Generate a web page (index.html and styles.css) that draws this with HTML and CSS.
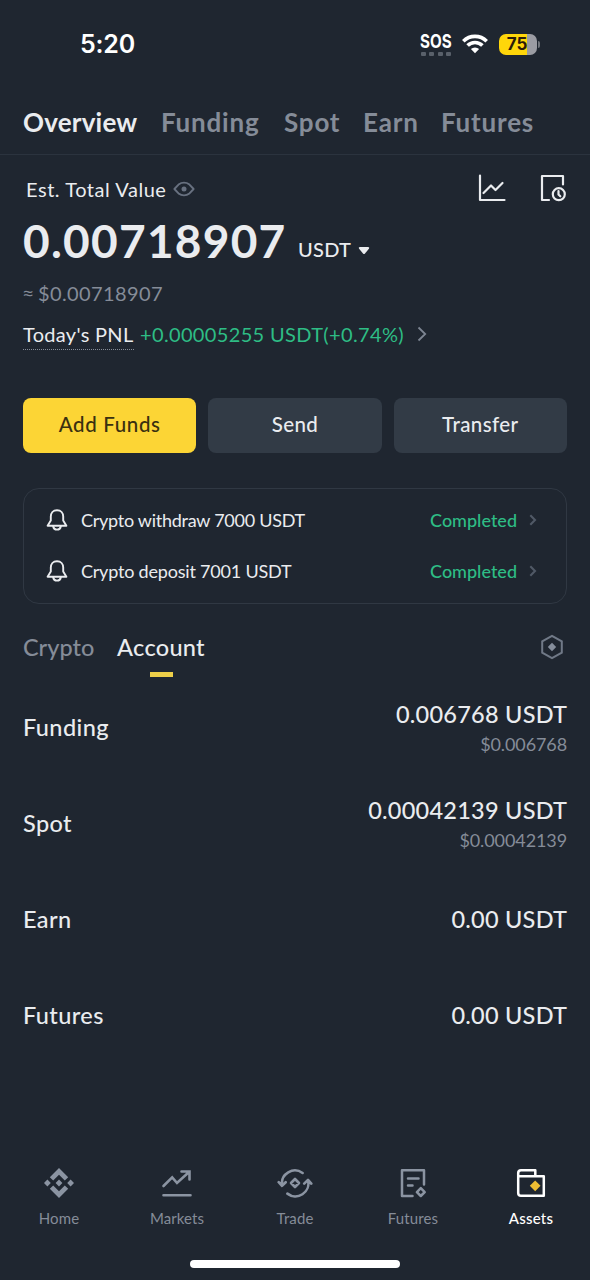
FILE: index.html
```html
<!DOCTYPE html>
<html lang="en">
<head>
<meta charset="utf-8">
<title>Assets overview</title>
<link rel="stylesheet" href="styles.css">
</head>
<body>
<div class="screen">
  <header class="status">
    <span class="clock">5:20</span>
    <div class="indicators">
      <div class="sos"><span class="sos-text">SOS</span><span class="dots"><i></i><i></i><i></i><i></i></span></div>
      <svg class="wifi" width="26" height="20" viewBox="0 0 26 20"><g fill="none" stroke="#fff" stroke-width="3.6"><path d="M1.3 7.2A16.6 16.6 0 0 1 24.7 7.2"/><path d="M5.6 11.6A10.4 10.4 0 0 1 20.4 11.6"/></g><path fill="#fff" d="M8.9 15.1a5.8 5.8 0 0 1 8.2 0L13 19.3z"/></svg>
      <div class="battery"><span class="level">75</span></div>
      <span class="battery-tip"></span>
    </div>
  </header>

  <nav class="tabs">
    <span class="tab tab-overview">Overview</span>
    <span class="tab tab-funding">Funding</span>
    <span class="tab tab-spot">Spot</span>
    <span class="tab tab-earn">Earn</span>
    <span class="tab tab-futures">Futures</span>
  </nav>

  <main class="content">
    <div class="total-head">
      <span class="total-label">Est. Total Value</span>
      <svg class="eye" width="22" height="16" viewBox="0 0 22 16"><path d="M1.4 8L6 3.2Q8 1.6 11 1.6T16 3.2L20.6 8L16 12.8Q14 14.4 11 14.4T6 12.8Z" fill="none" stroke="#687180" stroke-width="1.9" stroke-linejoin="round"/><circle cx="11" cy="8" r="2.5" fill="#687180"/></svg>
      <div class="tools">
        <svg width="28" height="28" viewBox="0 0 28 28" fill="none" stroke="#eaecef" stroke-width="2.2" stroke-linecap="round" stroke-linejoin="round"><path d="M2 1.5V26H26.5M5.5 19L13 11.5L17.5 16L24.5 9"/></svg>
        <svg width="28" height="28" viewBox="0 0 28 28" fill="none" stroke="#eaecef" stroke-width="2.2" stroke-linecap="round" stroke-linejoin="round"><path d="M10 26H3V2H24V10.5"/><circle cx="19.8" cy="20.2" r="6"/><path d="M19.5 17V20.4L21.3 22.3"/></svg>
      </div>
    </div>
    <div class="amount-row">
      <span class="amount">0.00718907</span>
      <span class="unit">USDT</span>
      <svg class="caret" width="12" height="8" viewBox="0 0 12 8"><path d="M1.7 0H10.3Q12 .4 10.9 1.8L7 6.5Q6 7.6 5 6.5L1.1 1.8Q0 .4 1.7 0Z" fill="#eaecef"/></svg>
    </div>
    <div class="approx"><span class="sign">≈</span><span>$0.00718907</span></div>
    <div class="pnl">
      <span class="pnl-label">Today's PNL</span>
      <span class="pnl-value">+0.00005255 USDT(+0.74%)</span>
      <svg width="10" height="16" viewBox="0 0 10 16"><path d="M1.5 1.5L8.2 8L1.5 14.5" fill="none" stroke="#7d8592" stroke-width="1.8"/></svg>
    </div>
    <div class="actions">
      <div class="button primary">Add Funds</div>
      <div class="button">Send</div>
      <div class="button">Transfer</div>
    </div>
    <section class="notices">
      <div class="notice">
        <svg width="22" height="22" viewBox="0 0 22 22" fill="none" stroke="#eaecef" stroke-width="1.9" stroke-linecap="round" stroke-linejoin="round"><path d="M11 1.2C7 1.2 4.8 4 4.8 7.6V11.5L1.6 16.8H20.4L17.2 11.5V7.6C17.2 4 15 1.2 11 1.2Z"/><path d="M7.2 17.5Q7.8 20.6 11 20.6T14.8 17.5"/></svg>
        <span class="notice-text withdraw">Crypto withdraw 7000 USDT</span><span class="state">Completed</span>
        <svg class="chevron" width="8" height="12" viewBox="0 0 8 12"><path d="M1.3 1.2L6 6L1.3 10.8" fill="none" stroke="#505966" stroke-width="2.1"/></svg>
      </div>
      <div class="notice">
        <svg width="22" height="22" viewBox="0 0 22 22" fill="none" stroke="#eaecef" stroke-width="1.9" stroke-linecap="round" stroke-linejoin="round"><path d="M11 1.2C7 1.2 4.8 4 4.8 7.6V11.5L1.6 16.8H20.4L17.2 11.5V7.6C17.2 4 15 1.2 11 1.2Z"/><path d="M7.2 17.5Q7.8 20.6 11 20.6T14.8 17.5"/></svg>
        <span class="notice-text deposit">Crypto deposit 7001 USDT</span><span class="state">Completed</span>
        <svg class="chevron" width="8" height="12" viewBox="0 0 8 12"><path d="M1.3 1.2L6 6L1.3 10.8" fill="none" stroke="#505966" stroke-width="2.1"/></svg>
      </div>
    </section>
    <div class="view-tabs">
      <span class="view crypto">Crypto</span>
      <span class="view account">Account</span>
      <svg class="settings" width="24" height="26" viewBox="0 0 24 26"><path d="M12 1.8L21.8 7.3V18.7L12 24.2L2.2 18.7V7.3Z" fill="none" stroke="#707987" stroke-width="2"/><path d="M12 8.8L16.2 13L12 17.2L7.8 13Z" fill="#858e9c"/></svg>
    </div>
    <section class="accounts">
      <div class="account-row"><span class="name">Funding</span><div class="value"><b>0.006768 USDT</b><small>$0.006768</small></div></div>
      <div class="account-row"><span class="name">Spot</span><div class="value"><b>0.00042139 USDT</b><small>$0.00042139</small></div></div>
      <div class="account-row"><span class="name">Earn</span><div class="value"><b>0.00 USDT</b></div></div>
      <div class="account-row"><span class="name">Futures</span><div class="value"><b>0.00 USDT</b></div></div>
    </section>
  </main>

  <footer class="bottom">
    <div class="item"><svg width="36" height="32" viewBox="0 0 36 32" fill="#8b94a2"><path d="M18 1L27.2 10.2L23.8 13.6L18 7.8L12.2 13.6L8.8 10.2ZM18 31L27.2 21.8L23.8 18.4L18 24.2L12.2 18.4L8.8 21.8ZM18 12.6L21.4 16L18 19.4L14.6 16ZM6.4 12.6L9.8 16L6.4 19.4L3 16ZM29.6 12.6L33 16L29.6 19.4L26.2 16Z"/></svg><span>Home</span></div>
    <div class="item"><svg width="36" height="32" viewBox="0 0 36 32" fill="none" stroke="#8b94a2" stroke-width="2.6"><path d="M4.5 19L13.2 10.3L18 16L30.3 4.8M22.5 4.5H30.5V12.5M4.5 28.2H31.5" stroke-linecap="round"/></svg><span>Markets</span></div>
    <div class="item"><svg width="36" height="32" viewBox="0 0 36 32" fill="none" stroke="#8b94a2" stroke-width="2.6" stroke-linecap="round" stroke-linejoin="round"><path d="M25.6 6A13 13 0 0 0 5 18.2M1.7 15.2L5 18.8L8.7 15.2M10.4 26.6A13 13 0 0 0 31 13.2M27.2 16.6L31 12.8L34.3 16.6"/><path d="M18 12L22 16L18 20L14 16Z"/></svg><span>Trade</span></div>
    <div class="item"><svg width="36" height="32" viewBox="0 0 36 32" fill="none" stroke="#8b94a2" stroke-width="2.5" stroke-linecap="round" stroke-linejoin="round"><path d="M17.5 29H7V3.2H29V17.5M13 11.4H23.5M13 18.4H17.5M25.8 21.2L29.7 25.1L25.8 29L21.9 25.1Z"/></svg><span>Futures</span></div>
    <div class="item active"><svg width="36" height="32" viewBox="0 0 36 32" fill="none" stroke="#fff" stroke-width="2.5" stroke-linejoin="round"><path d="M5.2 9.3V26Q5.2 28.8 8 28.8H30.8V9.3H5.2V6Q5.2 3.2 8 3.2H22.3V9"/><path d="M22.2 13.4L27.5 18.8L22.2 24.2L16.8 18.8Z" fill="#eebd33" stroke="none"/></svg><span>Assets</span></div>
  </footer>
  <div class="home-bar"></div>
</div>
</body>
</html>
```
FILE: styles.css
```css
* { box-sizing: border-box; }
body { margin: 0; background: #1f2630; color: #eaecef; font-family: Lato, "Open Sans", sans-serif; }
svg { display: block; flex: none; }
.screen { width: 590px; height: 1280px; display: flex; flex-direction: column; overflow: hidden; white-space: nowrap; }

.status { height: 88px; padding: 0 50px 0 80px; display: flex; align-items: center; justify-content: space-between; }
.clock { font: 600 25px/30px Inter, sans-serif; color: #fff; letter-spacing: -.2px; }
.indicators { display: flex; align-items: center; }
.sos { width: 32px; margin-right: 10px; }
.sos-text { display: block; width: 42px; height: 19px; font: 700 19px/19px Inter, sans-serif; color: #fff; transform: scaleX(.8); transform-origin: left; }
.dots { display: flex; justify-content: space-between; padding: 0 1px; margin-top: 1px; }
.dots i { width: 5px; height: 4px; background: #59606a; border-radius: 1px; }
.wifi { margin-right: 11px; }
.battery { width: 38px; height: 21px; border-radius: 7px; background: linear-gradient(90deg, #ffd60a 75%, #9b9ca3 75%); }
.level { display: block; padding-right: 2px; text-align: center; font: 700 17px/21px Inter, sans-serif; color: #2c1b08; }
.battery-tip { width: 2px; height: 7px; margin-left: 1px; background: #70747b; border-radius: 0 2px 2px 0; }

.tabs { height: 67px; flex: none; padding: 1px 23px 0; display: flex; align-items: center; gap: 24px; border-bottom: 1px solid #2b333e; font-weight: 700; font-size: 26px; line-height: 34px; letter-spacing: .8px; color: #858c98; }
.tab-overview { width: 114px; letter-spacing: .2px; color: #eaecef; }
.tab-funding { width: 99px; }
.tab-spot { width: 55px; }
.tab-earn { width: 54px; }

.content { padding: 0 23px; }
.total-head { height: 66px; display: flex; align-items: center; padding: 2px 0 0 3px; }
.total-label { width: 140px; font-size: 20px; letter-spacing: .55px; }
.eye { margin-left: 7px; }
.tools { margin: -3px 0 0 auto; display: flex; gap: 33px; }
.amount-row { height: 40px; display: flex; align-items: flex-start; }
.amount { width: 275px; font-weight: 700; font-size: 46px; line-height: 40px; letter-spacing: 1.25px; }
.unit { width: 54px; padding-top: 16px; font-weight: 500; font-size: 20px; line-height: 24px; letter-spacing: .3px; }
.caret { margin: 26px 0 0 6px; }
.approx { display: flex; gap: 4px; margin-top: 18px; font-size: 20px; line-height: 28px; letter-spacing: .4px; color: #858c98; }
.sign { width: 11px; font-family: "Open Sans", sans-serif; font-size: 18px; line-height: 29px; }
.pnl { margin-top: 10px; height: 32px; display: flex; align-items: center; font-size: 20px; line-height: 30px; }
.pnl-label { width: 111px; letter-spacing: .3px; border-bottom: 1px dotted #858c98; }
.pnl-value { width: 265px; margin-left: 6px; margin-right: 12px; letter-spacing: .35px; color: #2ebd85; }
.actions { display: grid; grid-template-columns: repeat(3, 1fr); gap: 12px; margin-top: 48px; }
.button { height: 55px; border-radius: 8px; background: #323b46; font-weight: 500; font-size: 20.5px; line-height: 53px; letter-spacing: .4px; text-align: center; }
.primary { background: #fcd535; color: #3a3010; letter-spacing: .65px; }
.notices { height: 116px; margin-top: 35px; padding: 5px 29px 7px 22px; border: 1px solid #303843; border-radius: 16px; }
.notice { height: 51px; display: flex; align-items: center; font-size: 18px; }
.notice-text { margin-left: 13px; }
.withdraw { letter-spacing: -.26px; }
.deposit { letter-spacing: -.2px; }
.state { margin-left: auto; margin-right: 12px; font-weight: 500; color: #2ebd85; }
.view-tabs { height: 75px; padding-top: 28px; display: flex; font-weight: 500; font-size: 23.5px; line-height: 30px; }
.view { height: 46px; }
.crypto { width: 94px; color: #858c98; }
.account { width: 88px; display: flex; flex-direction: column; align-items: center; letter-spacing: .3px; }
.account::after { content: ""; width: 23px; height: 5px; margin-top: 10px; background: #edcf49; }
.settings { margin: 2px 3px 0 auto; }
.accounts { padding-top: 1px; }
.account-row { height: 96px; display: flex; align-items: center; justify-content: space-between; font-size: 23.5px; font-weight: 500; }
.name { letter-spacing: .4px; margin-bottom: 2px; }
.value { text-align: right; }
.value b { display: block; font-weight: 500; line-height: 32px; letter-spacing: .25px; margin-right: -.25px; }
.value b:only-child { margin-bottom: 2px; }
.value small { display: block; font-size: 18px; font-weight: 400; line-height: 28px; letter-spacing: -.1px; color: #858c98; }

.bottom { display: grid; grid-template-columns: repeat(5, 118px); margin-top: auto; height: 93px; flex: none; }
.item { display: flex; flex-direction: column; align-items: center; font-size: 15px; line-height: 20px; gap: 9px; letter-spacing: .1px; color: #858c98; }
.active { color: #fff; font-weight: 500; letter-spacing: .2px; }
.home-bar { width: 210px; height: 8px; flex: none; margin: 0 auto 12px; border-radius: 4px; background: #fff; }
```
